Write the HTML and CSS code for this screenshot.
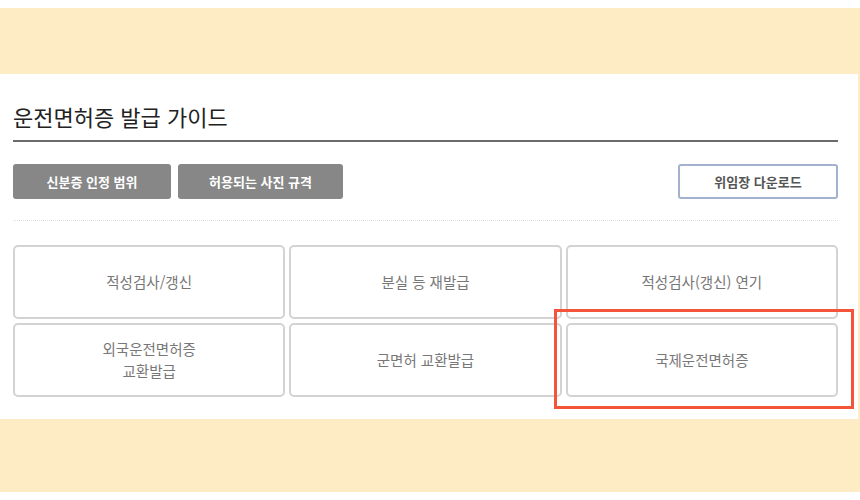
FILE: index.html
```html
<!DOCTYPE html>
<html lang="ko">
<head>
    <meta charset="UTF-8">
    <meta name="viewport" content="width=device-width, initial-scale=1.0">
    <title>운전면허증 발급 가이드</title>
    <link rel="stylesheet" href="styles.css">
</head>
<body>
    <div class="frame">
        <div class="panel">
            <h2 class="guide-title">운전면허증 발급 가이드</h2>

            <div class="btn-row">
                <div class="btn-group">
                    <button class="btn-gray">신분증 인정 범위</button>
                    <button class="btn-gray wide">허용되는 사진 규격</button>
                </div>
                <button class="btn-line">위임장 다운로드</button>
            </div>

            <ul class="menu-grid">
                <li class="menu-item">적성검사/갱신</li>
                <li class="menu-item">분실 등 재발급</li>
                <li class="menu-item">적성검사(갱신) 연기</li>
                <li class="menu-item">외국운전면허증<br>교환발급</li>
                <li class="menu-item">군면허 교환발급</li>
                <li class="menu-item highlighted">국제운전면허증</li>
            </ul>
        </div>
    </div>
</body>
</html>
```

FILE: styles.css
```css
body {
    margin: 0;
    background: #fff;
    font-family: "Noto Sans CJK KR", "Noto Sans", sans-serif;
    padding: 8px 0;
}
.frame {
    background: #feedc4;
    padding: 66px 2px 73px 0;
}
.panel {
    background: #fff;
    padding: 26px 20px 22px 13px;
}
.guide-title {
    margin: 0;
    font-size: 22px;
    font-weight: 400;
    line-height: 32px;
    color: #222;
    padding-bottom: 8px;
    border-bottom: 2px solid #6b6b6b;
}
.btn-row {
    display: flex;
    justify-content: space-between;
    margin-top: 22px;
    padding-bottom: 21px;
    border-bottom: 1px dotted #ddd;
}
.btn-group {
    display: flex;
    gap: 7px;
}
button {
    font-family: inherit;
    height: 35px;
    border-radius: 3px;
    font-size: 13px;
    cursor: pointer;
}
.btn-gray {
    width: 158px;
    background: #878787;
    color: #fff;
    font-weight: 700;
    border: none;
}
.btn-gray.wide {
    width: 165px;
}
.btn-line {
    width: 160px;
    background: #fff;
    color: #555;
    font-weight: 700;
    border: 2px solid #a3b3cf;
}
.menu-grid {
    list-style: none;
    margin: 24px 0 0;
    padding: 0;
    display: grid;
    grid-template-columns: repeat(3, 1fr);
    gap: 4px;
}
.menu-item {
    position: relative;
    height: 74px;
    box-sizing: border-box;
    border: 2px solid #d3d3d3;
    border-radius: 5px;
    display: flex;
    align-items: center;
    justify-content: center;
    text-align: center;
    font-size: 14.5px;
    line-height: 22px;
    color: #777;
}
.highlighted::after {
    content: "";
    position: absolute;
    left: -14px;
    right: -18px;
    top: -16px;
    bottom: -14px;
    border: 3px solid #f4553a;
}
```
